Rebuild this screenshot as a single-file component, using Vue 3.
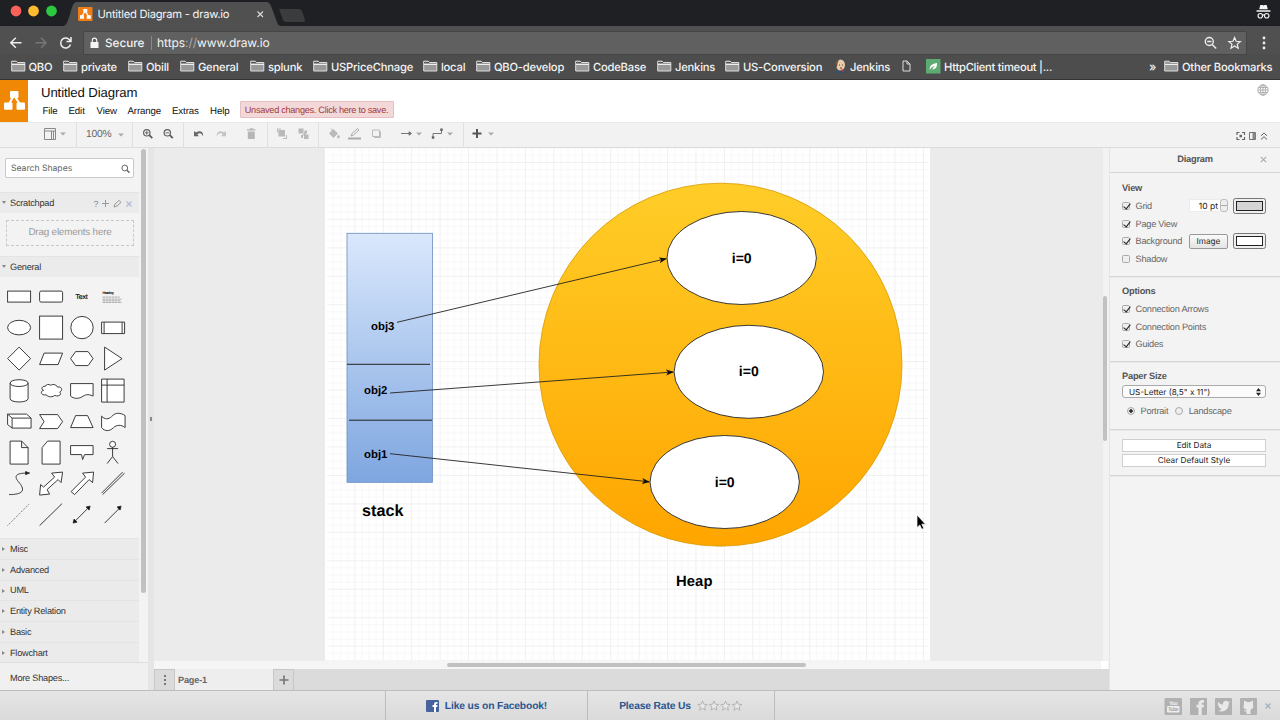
<script setup>
const bookmarks = [
  { t: 'QBO', w: 52.5 }, { t: 'private', w: 65 }, { t: 'Obill', w: 52 }, { t: 'General', w: 70 },
  { t: 'splunk', w: 63 }, { t: 'USPriceChnage', w: 110 }, { t: 'local', w: 53 }, { t: 'QBO-develop', w: 99 },
  { t: 'CodeBase', w: 82 }, { t: 'Jenkins', w: 68 }, { t: 'US-Conversion', w: 108 }
]
const shapes = [
  '<rect x="-11" y="-5.5" width="23" height="11"/>',
  '<rect x="-11" y="-5.5" width="23" height="11" rx="1.5"/>',
  '<text x="-6" y="2.5" font-size="6.8" textLength="12" fill="#000" stroke="#000" stroke-width=".15">Text</text>',
  '<text x="-10" y="-2.4" font-size="3.6" font-weight="bold" fill="#111" stroke="none" textLength="11">Heading</text><path stroke="#888" stroke-width=".7" stroke-dasharray="3 .5 2 .4" d="M-10 .5H7M-10 2.5H9M-10 4.2H8M-10 5.8H9"/>',
  '<ellipse cx=".5" cy="0" rx="11.5" ry="7.3"/>',
  '<rect x="-11" y="-11.5" width="23" height="23"/>',
  '<circle cx=".4" cy="0" r="11.2"/>',
  '<path d="M-11-5.5H12V6H-11ZM-8.5-5.5V6M9.5-5.5V6"/>',
  '<path d="M.5-11.5 12 0 .5 11.5-11 0Z"/>',
  '<path d="M-11 6-6.5-5.5H12L7.500 6Z"/>',
  '<path d="M-11 0-6-7H6.500L11.500 0 6.500 7H-6Z"/>',
  '<path d="M-8-11.500 9.500 0-8 11.500Z"/>',
  '<path d="M-8.500-7.500V8C-8.500 12.500 9.500 12.500 9.500 8V-7.500C9.500-12-8.500-12-8.500-7.500C-8.500-3 9.500-3 9.500-7.500"/>',
  '<path d="M-5-4.500C-9-4.500-10-1-7-.3C-11.500 1-8.500 5.500-4.500 4.200C-2 7 2.500 6.500 4 4.800C7.500 6.500 12 4 9 1.500C13-.5 10.500-4.500 7-3.500C5.500-6.500 1.500-6.500 0-5.300C-2-6.800-4.500-6.300-5-4.500Z"/>',
  '<path d="M-11-7H11.500V5.500C6 3 4 4 0 6.500C-4 8.500-8 8-11 5.500Z"/>',
  '<path d="M-11-11.500H11.500V11.500H-11ZM-5.500-11.500V11.500M-11-5.500H11.500"/>',
  '<path d="M-11-7.500H8L12.500-3.500V6.500H-6.500L-11 3ZM-11-7.500-6.500-3.500V6.500M-6.500-3.500H12.500"/>',
  '<path d="M-11-7H7L12 0 7 7H-11L-6.500 0Z"/>',
  '<path d="M-11 6-6-6H6L11.500 6Z"/>',
  '<path d="M-11-5.500C-8-2-4-2-1-5C3-9.500 8-9 12.500-6V6C9 3 4 3 1 6C-3 10-8 10-11 6Z"/>',
  '<path d="M-8.500-11.500H3L9.500-5V11.500H-8.500ZM3-11.500V-5H9.500"/>',
  '<path d="M-3-11.500H9.500V11.500H-8.500V-5Z"/>',
  '<path d="M-11-7H11.500V2H3L1 7 0 2H-11Z"/>',
  '<circle cx="0" cy="-8.300" r="3"/><path d="M0-5.300V4M-5.500-4H5.500M0 4-5.500 11M0 4 5.500 11"/>',
  '<g fill="none"><path d="M-9.500 11C4 11 7 7 1-.5C-6-8-2-10.500 8-10.500"/><path fill="#111" d="M7-12 11-10.500 7-9Z"/></g>',
  '<path d="M12-11.500 10.500-1 7.500-4-3.500 6-1 10.500-11 11.500-10 1-7 3.500 4-6.500 1-10.500Z"/>',
  '<path d="M12-11.500 11-1 7.500-4-7 11-10.500 8 4-6.500 1-10.500Z"/>',
  '<path d="M-11 9.500 10-11.500M-10 11 12-10.500"/>',
  '<path stroke="#555" stroke-width=".9" stroke-dasharray="1.200 1.200" d="M-11 11 11-11"/>',
  '<path d="M-11 11 11.500-11"/>',
  '<path d="M-7 7 7-7"/><path fill="#111" d="M8.500-8.500 7.500-4.500 4.500-7.500ZM-8.500 8.500-7.500 4.500-4.500 7.500Z"/>',
  '<path d="M-8 8.500 7-6.500"/><path fill="#111" d="M8.500-8.500 7.500-4.500 4.500-7.500Z"/>'
]
const sections = ['Misc', 'Advanced', 'UML', 'Entity Relation', 'Basic', 'Flowchart']
const heapObjects = [{ x: 741.7, y: 258 }, { x: 748.8, y: 371.8 }, { x: 724.7, y: 482 }]
const stackLabels = [{ t: 'obj3', x: 371, y: 329.500 }, { t: 'obj2', x: 364, y: 393.700 }, { t: 'obj1', x: 364, y: 457.700 }]
const edges = ['M397 322.300 666 258.700', 'M390 393 673 372', 'M390 453.700 649 481.800']
</script>

<template>
  <div class="window">
    <header class="chrome">
      <div class="tabstrip">
        <svg class="tabs" width="320" height="26" viewBox="0 0 320 26">
          <circle cx="16" cy="11" r="5.400" fill="#fc605b" /><circle cx="33.500" cy="11" r="5.400" fill="#fdbc2f" /><circle cx="51.500" cy="11" r="5.400" fill="#2bc840" />
          <path d="M64 26C68 25 70 12 73 5C74 3 75 2 77 2H266C269 2 270 4 271 6L277 22C278 25 279 26 282 26Z" fill="#505050" />
          <path d="M279 9H299Q301 9 302 11L305 20Q305 22 303 22H286Q284 22 283 20Z" fill="#3b3c3e" />
          <rect x="78" y="7" width="14.500" height="14" rx=".8" fill="#ef7e17" />
          <path d="M85.200 11 81.500 17M85.200 11 89 17" stroke="#fff" stroke-width="1.300" /><path d="M83.300 9h4v3.500h-4ZM80 15.300h4v3.500h-4ZM86.800 15.300h4v3.500h-4Z" fill="#fff" />
          <path d="M257.500 11.500 263 17M263 11.500 257.500 17" stroke="#ddd" stroke-width="1.100" />
        </svg>
        <span class="tab-title">Untitled Diagram - draw.io</span>
        <svg class="incognito" width="15" height="16" viewBox="0 0 14 15"><path d="M4 1H6L7 1.500 8 1H10L11 5H3ZM.5 5.800H13.500V7.300H.5Z" fill="#f5f5f5" stroke="none" /><circle cx="4" cy="11" r="2.100" /><circle cx="10" cy="11" r="2.100" /><path d="M6 10.500Q7 9.800 8 10.500" /></svg>
      </div>
      <div class="addressbar">
        <svg class="nav" width="83" height="28" viewBox="0 26 83 28" fill="none" stroke-width="1.500">
          <path d="M21.500 42.700H11M15.800 37.700 10.800 42.700 15.800 47.700" stroke="#eee" /><path d="M35.500 42.700H46M41 37.700 46 42.700 41 47.700" stroke="#777" />
          <path d="M70.500 41.500A5 5 0 1 0 70.500 44.500M71 37V41.500H66.500" stroke="#eee" />
        </svg>
        <div class="omnibox">
          <svg width="9" height="12" viewBox="0 0 9 12"><path d="M.5 5H8.500V11H.5Z" fill="#f5f5f5" /><path d="M2.300 5V3.300A2.200 2.200 0 0 1 6.700 3.300V5" fill="none" stroke="#f5f5f5" stroke-width="1.100" /></svg>
          <span class="secure">Secure</span><i></i><span class="url">https<em>://</em>www.draw.io</span>
          <svg class="omni-icons" width="44" height="18" viewBox="1202 34 44 18" fill="none" stroke="#eee" stroke-width="1.400"><circle cx="1209.300" cy="41.500" r="4" /><path d="M1207.200 41.500H1211.400M1212.200 44.500 1216.200 48.500" /><path stroke-width="1.200" d="M1234.600 37.500 1236.200 41.300 1240.300 41.600 1237.200 44.200 1238.200 48.200 1234.600 46 1231 48.200 1232 44.200 1228.900 41.600 1233 41.300Z" /></svg>
        </div>
        <svg class="more" width="6" height="14" viewBox="0 0 6 14" fill="#eee"><circle cx="3" cy="2" r="1.400" /><circle cx="3" cy="7" r="1.400" /><circle cx="3" cy="12" r="1.400" /></svg>
      </div>
      <nav class="bookmarks">
        <span v-for="(b, i) in bookmarks" :key="i" class="bm" :style="{ width: b.w + 'px' }">
          <svg width="15" height="12" viewBox="0 0 15 12"><path d="M.7 11V1.200H5.200L6.500 2.500H13.800V11Z" fill="#999" stroke="#ddd" /><path d="M1 4.500H14" stroke="#eee" /><path d="M1 2.500H6" stroke="#444" stroke-width=".8" /></svg>{{ b.t }}
        </span>
        <span class="bm face"><svg width="13" height="15" viewBox="0 0 13 15"><path d="M2 14Q2 10 6 10Q11 10 12 14Z" fill="#35506a" /><ellipse cx="6.500" cy="6" rx="4.500" ry="5.500" fill="#e8cba9" /><path d="M2 8Q1 2 5 1Q3 4 3 8" fill="#76513a" /><path d="M5 6H6M8 6H9M6 9H8" stroke="#60442e" /><path d="M6 11 10 13V10Z" fill="#cf3338" /></svg>Jenkins</span>
        <span class="bm doc"><svg width="9" height="12" viewBox="0 0 9 12"><path d="M1 1H5L8 4V11H1ZM5 1V4H8" fill="none" stroke="#ddd" /></svg></span>
        <span class="bm http"><svg width="15" height="15" viewBox="0 0 15 15"><rect width="14.500" height="14.500" fill="#5eab72" /><path d="M3.500 11Q3 5 11 4Q11.500 10 6 10.500L9 6.500Q5 8 3.500 11Z" fill="#fff" /></svg>HttpClient timeout |...</span>
        <span class="chev">»</span>
        <span class="bm"><svg width="15" height="12" viewBox="0 0 15 12"><path d="M.7 11V1.200H5.200L6.500 2.500H13.800V11Z" fill="#999" stroke="#ddd" /><path d="M1 4.500H14" stroke="#eee" /></svg>Other Bookmarks</span>
      </nav>
    </header>

    <div class="appbar">
      <svg class="logo" width="28" height="42" viewBox="0 0 28 42"><rect width="28" height="42" fill="#f08705" /><path d="M14 15 8 26M14 15 21 26" stroke="#fff" stroke-width="2.200" /><g fill="#fff"><rect x="10" y="11" width="8.500" height="7" rx="1" /><rect x="4" y="22.500" width="8.500" height="7.300" rx="1" /><rect x="16.500" y="22.500" width="8.500" height="7.300" rx="1" /></g></svg>
      <div class="titles">
        <div class="doc-title">Untitled Diagram</div>
        <div class="menu"><span>File</span><span>Edit</span><span>View</span><span>Arrange</span><span>Extras</span><span>Help</span><b>Unsaved changes. Click here to save.</b></div>
      </div>
      <svg class="globe" width="12" height="12" viewBox="0 0 12 12" fill="none" stroke="#aaa" stroke-width=".9"><circle cx="6" cy="6" r="5.200" /><ellipse cx="6" cy="6" rx="2.500" ry="5.200" /><path d="M6 1V11M1 6H11M1.700 3.500H10.300M1.700 8.500H10.300" /></svg>
    </div>

    <div class="toolbar">
      <svg class="g1" width="76" height="25" viewBox="0 122 76 25"><path d="M44.500 128.500H55.500V139.500H44.500ZM44.500 131H55.500M51.500 131V139.500M53.500 131V139.500" fill="none" stroke="#888" /><path d="M60 132.500H66L63 135.500Z" fill="#aaa" /></svg>
      <div class="zoomlevel">100%<svg width="6" height="4" viewBox="0 0 6 4"><path d="M0 .5H6L3 3.500Z" fill="#aaa" /></svg></div>
      <svg class="g3" width="50" height="25" viewBox="133 122 50 25" fill="none" stroke="#5f5f5f"><g stroke-width="1.200"><circle cx="146.800" cy="132.800" r="3.200" /><circle cx="167.300" cy="132.800" r="3.200" /><path d="M145 132.800H148.600M146.800 131V134.600M165.500 132.800H169.100" stroke-width=".9" /><path stroke-width="1.900" d="M149.300 135.200 152.300 138.200M169.800 135.200 172.800 138.200" /></g></svg>
      <svg class="g4" width="83" height="25" viewBox="184 122 83 25"><path d="M194 131V136.200H199L197.300 134.500C199 132.500 202 133 203 136.500C204 132 200 129.500 196 132.500Z" fill="#686868" /><path d="M226 131V136.200H221L222.700 134.500C221 132.500 218 133 217 136.500C216 132 220 129.500 224 132.500Z" fill="#c4c4c4" /><path d="M247 130.500V129.200H249.500L250 128.200H253L253.500 129.200H255.500V130.500ZM247.800 131.500H254.800V139H247.800Z" fill="#b6b6b6" /></svg>
      <svg class="g5" width="50" height="25" viewBox="268 122 50 25"><g fill="#b9b9b9"><rect x="278.500" y="130" width="6.500" height="6.500" /><path d="M277 128.500h4v1h-3v3h-1ZM283 138h3v-3h1v4h-4Z" /><rect x="298.500" y="128.500" width="5" height="5" /><rect x="304" y="134.500" width="4.500" height="4.500" /><path d="M304.500 130.500h2.500v3h-1.500v2h-2.500v2.500h-2v-3h2l1-2Z" /></g></svg>
      <svg class="g6" width="144" height="25" viewBox="319 122 144 25" fill="none" stroke="#777"><path d="M329.500 133.500 333 129.500 337.500 133.500 333.500 137.500ZM331 128.500 334 131.500M338.500 135Q340.500 138 338.500 138Q336.500 138 338.500 135" fill="#bbb" stroke="#bbb" /><path d="M348 138.500H361" stroke="#aaa" stroke-width="2" /><path d="M351 136 352 133.500 357.500 128.500 359 130 353.500 135Z" stroke="#aaa" /><path d="M372.500 130H379.500V136.500H372.500ZM374 137.500H380.500V131.500" stroke="#bbb" /><path d="M401 133.500H410M409 131.800 411.500 133.500 409 135.200Z" fill="#666" /><path d="M433 137.500V133.500H441.500V129.500" stroke="#777" /><path fill="#666" stroke="none" d="M431.800 136.200h2.500v2.500h-2.500ZM440.200 128.500h2.500v2.500h-2.500Z" /><path fill="#aaa" stroke="none" d="M416 132.500H422L419 135.500ZM447 132.500H453L450 135.500Z" /></svg>
      <svg class="g7" width="40" height="25" viewBox="464 122 40 25"><path d="M477 129V138M472.500 133.500H481.500" stroke="#555" stroke-width="2" /><path fill="#aaa" d="M488 132.500H494L491 135.500Z" /></svg>
      <svg class="tb-right" width="40" height="25" viewBox="1232 122 40 25" fill="none" stroke="#666"><path stroke-width="1.200" d="M1237 135V132.500H1239.500M1242 132.500H1244.500V135M1244.500 137V139.500H1242M1239.500 139.500H1237V137" /><rect x="1239.500" y="134.800" width="2.500" height="2.500" fill="#666" stroke="none" /><path stroke-width=".9" d="M1249.500 132.500H1255.500V139.500H1249.500Z" /><path stroke="none" fill="#888" d="M1252.500 133H1255.500V139H1252.500Z" /><path d="M1261 135.800 1264 133 1267 135.800M1261 139.500 1264 136.700 1267 139.500" /></svg>
    </div>

    <main>
      <aside class="sidebar">
        <div class="palettes">
          <div class="search">Search Shapes<svg width="9" height="10" viewBox="0 0 9 10" fill="none" stroke="#666"><circle cx="3.800" cy="4" r="2.900" /><path stroke-width="1.500" d="M6 6.200 8.500 8.800" /></svg></div>
          <div class="section open">Scratchpad<svg width="42" height="12" viewBox="92 197 42 12" fill="none" stroke="#999"><text x="93.500" y="206.500" font-size="9" font-family="Liberation Sans, sans-serif" fill="#888" stroke="none">?</text><path d="M105.500 200V207M102 203.500H109M114 207 115 204 119 200.500 121 202.300 117 206Z" /><path stroke="#b3bbd8" stroke-width="1.300" d="M126.500 201.500 131.500 206.500M131.500 201.500 126.500 206.500" /></svg></div>
          <div class="drag">Drag elements here</div>
          <div class="section open">General</div>
          <div class="shapes"><svg v-for="(s, i) in shapes" :key="i" viewBox="-15.600 -15.600 31.200 31.200" fill="#fff" stroke="#333" stroke-width=".95" font-family="Liberation Sans, sans-serif" v-html="s" /></div>
          <div v-for="s in sections" :key="s" class="section closed">{{ s }}</div>
        </div>
        <div class="more-shapes">More Shapes...</div>
        <div class="side-scroll"></div>
      </aside>
      <div class="splitter"><i></i></div>

      <section class="workspace">
        <div class="canvas-row">
          <svg class="canvas" width="949" height="513" viewBox="154 148 949 513">
            <defs>
              <pattern id="grid" x="325.900" y="162" width="28.430" height="28.450" patternUnits="userSpaceOnUse">
                <path d="M7.600 0V28.450M14.700 0V28.450M21.800 0V28.450M0 7.600H28.430M0 14.700H28.430M0 21.800H28.430" stroke="#f8f8f8" fill="none" />
                <path d="M.5 0V28.450M0 .5H28.430" stroke="#f0f0f0" fill="none" />
              </pattern>
              <linearGradient id="blue" x2="0" y2="1"><stop stop-color="#dae8fc" /><stop offset="1" stop-color="#7ea6e0" /></linearGradient>
              <linearGradient id="orange" x2="0" y2="1"><stop stop-color="#ffcd28" /><stop offset="1" stop-color="#ffa500" /></linearGradient>
              <marker id="arrow" viewBox="0 0 8 6" refX="7" refY="3" markerWidth="8" markerHeight="6.500" markerUnits="userSpaceOnUse" orient="auto"><path d="M0 0 8 3 0 6 2 3Z" fill="#111" /></marker>
            </defs>
            <rect x="325" y="148" width="605" height="512.500" fill="#fff" />
            <rect x="327" y="148" width="601" height="512" fill="url(#grid)" />
            <rect x="347" y="233.300" width="85.500" height="249" fill="url(#blue)" stroke="#6c8ebf" stroke-width=".8" />
            <circle cx="720.500" cy="364.700" r="181.500" fill="url(#orange)" stroke="#d79b00" stroke-width=".8" />
            <ellipse v-for="(h, i) in heapObjects" :key="i" :cx="h.x" :cy="h.y" rx="74.700" ry="46.500" fill="#fff" stroke="#222" stroke-width=".9" />
            <path d="M347 364.300H430M349 420.200H432" stroke="#222" />
            <path v-for="e in edges" :key="e" :d="e" stroke="#222" stroke-width=".9" marker-end="url(#arrow)" />
            <g class="labels">
              <text v-for="(h, i) in heapObjects" :key="i" :x="h.x" :y="h.y + 4.500" text-anchor="middle" font-size="14">i=0</text>
              <text v-for="l in stackLabels" :key="l.t" :x="l.x" :y="l.y" font-size="11.400">{{ l.t }}</text>
              <text x="362" y="516.300" font-size="16.200">stack</text>
              <text x="676" y="585.500" font-size="14.800" textLength="36.500">Heap</text>
            </g>
            <path d="M917 515V527.500L919.800 525 921.800 529.300 923.800 528.300 921.800 524.200H925.500Z" fill="#000" stroke="#fff" stroke-width=".7" />
          </svg>
          <div class="vtrack"><i></i></div>
        </div>
        <div class="htrack"><i></i><b></b></div>
        <div class="pages">
          <span class="pg-menu"><svg width="4" height="12" viewBox="0 0 4 12" fill="#777"><path d="M1 1h2v2H1ZM1 5h2v2H1ZM1 9h2v2H1Z" /></svg></span>
          <span class="pg-tab">Page-1</span>
          <span class="pg-add"><svg width="10" height="10" viewBox="0 0 10 10"><path d="M5 .5V9.500M.5 5H9.500" stroke="#777" stroke-width="1.700" /></svg></span>
        </div>
      </section>

      <aside class="format">
        <div class="fmt-title">Diagram<svg width="7" height="7" viewBox="0 0 7 7"><path d="M.8.8 6.200 6.200M6.200.8.8 6.200" stroke="#aaa" stroke-width="1.100" /></svg></div>
        <div class="block view">
          <h4>View</h4>
          <div class="row"><span class="cb on"></span>Grid<span class="num">10 pt</span><span class="step"></span><span class="swatch grey"><i></i></span></div>
          <div class="row"><span class="cb on"></span>Page View</div>
          <div class="row"><span class="cb on"></span>Background<span class="imgbtn">Image</span><span class="swatch"><i></i></span></div>
          <div class="row"><span class="cb"></span>Shadow</div>
        </div>
        <div class="block options">
          <h4>Options</h4>
          <div class="row"><span class="cb on"></span>Connection Arrows</div>
          <div class="row"><span class="cb on"></span>Connection Points</div>
          <div class="row"><span class="cb on"></span>Guides</div>
        </div>
        <div class="block paper">
          <h4>Paper Size</h4>
          <div class="select">US-Letter (8,5" x 11")<svg width="5" height="8" viewBox="0 0 5 8"><path d="M0 3.300 2.500 0 5 3.300ZM0 4.700 2.500 8 5 4.700Z" fill="#222" /></svg></div>
          <div class="radios"><span class="rb on"></span>Portrait<span class="rb"></span>Landscape</div>
        </div>
        <div class="block actions"><div class="btn">Edit Data</div><div class="btn">Clear Default Style</div></div>
      </aside>
    </main>

    <footer>
      <div class="f-empty"></div>
      <div class="f-like"><svg width="13" height="12" viewBox="0 0 13 12"><rect width="13" height="12" rx="1" fill="#47639e" /><path d="M8 12V7H6.500V5H8C7.800 2.500 9 1.500 11.500 2V3.800C10 3.600 10 4 10 5H11.500L11.200 7H10V12Z" fill="#fff" /></svg>Like us on Facebook!</div>
      <div class="f-rate">Please Rate Us<svg width="46" height="12" viewBox="0 0 46 12" fill="#e9e9e9" stroke="#aaa" stroke-width=".8"><path v-for="n in 4" :key="n" :transform="`translate(${(n - 1) * 11.500} 0)`" d="M5.500 1 6.800 4.200 10.200 4.500 7.600 6.700 8.400 10.200 5.500 8.300 2.600 10.200 3.400 6.700.8 4.500 4.200 4.200Z" /></svg></div>
      <svg class="social" width="110" height="20" viewBox="1163 696 110 20">
        <g fill="#b1b1b1"><rect x="1164.500" y="698" width="17.500" height="17" rx="1" /><rect x="1190" y="698" width="17" height="17" rx="1" /><rect x="1215" y="698" width="17" height="17" rx="1" /><rect x="1240" y="698" width="17" height="17" rx="1" /></g>
        <rect x="1167" y="706" width="12.500" height="6.500" rx="1" fill="#eee" />
        <g font-family="Liberation Sans, sans-serif" font-weight="bold" font-size="5.500"><text x="1169" y="704.800" textLength="8.500" fill="#eee">You</text><text x="1168" y="711.300" textLength="10.500" fill="#aaa">Tube</text></g>
        <g fill="#e9e9e9"><path d="M1198.500 715V707.500H1196.500V704.800H1198.500C1198 701 1200 699.500 1204 700V702.800C1201.800 702.600 1201.700 703 1201.700 704.800H1204L1203.600 707.500H1201.700V715Z" /><path d="M1218 702C1220 704 1221.500 704.500 1223 704.500C1222.500 700.500 1227 700 1228 702L1230 701.500 1228.700 703.500C1229 710 1223 713 1218 710.500C1220 710.500 1221 710 1221.500 709C1219.500 708.500 1219 707.500 1219 706.500C1218 705.500 1217.500 704 1218 702Z" /><path d="M1244 700.500 1247 702H1250L1253 700.500V704.500C1254 708 1252.500 709 1250.500 709.500V714H1246.500V711.500C1244.500 712 1244.500 710.500 1243.500 710C1245 710 1245 711 1246.500 710.500V709.500C1243.500 709 1243 707 1244 704.500Z" /></g>
        <path d="M1265.500 703.500 1270.500 708.500M1270.500 703.500 1265.500 708.500" stroke="#a3b0c3" stroke-width="1.300" />
      </svg>
    </footer>
  </div>
</template>

<style>
html, body { margin: 0; overflow: hidden; }
</style>

<style scoped>
* { box-sizing: border-box; }
svg { display: block; flex: none; }
.window { width: 1280px; height: 720px; display: flex; flex-direction: column; overflow: hidden; font: 9.2px "Liberation Sans", Arial, sans-serif; text-rendering: geometricPrecision; color: #333; white-space: nowrap; background: #fff; }
.chrome { height: 80px; flex: none; font-family: Inter, sans-serif; color: #f4f4f4; background: #4d4d4d; border-bottom: 1px solid #353535; }
.tabstrip { height: 26px; background: #1e2023; position: relative; display: flex; justify-content: flex-end; align-items: center; padding-right: 9px; }
.tabs { position: absolute; left: 0; top: 0; }
.tab-title { position: absolute; left: 97.500px; top: 6px; font-size: 11.200px; line-height: 16px; letter-spacing: -.25px; }
.incognito { fill: none; stroke: #eee; stroke-width: 1.1; margin-top: -3px; }
.addressbar { height: 28px; display: flex; align-items: center; background: #505050; }
.omnibox { width: 1164px; height: 24px; margin-top: 5px; background: #606060; border: 1px solid #454545; border-radius: 2px; display: flex; align-items: center; padding: 0 0 0 6px; font-size: 12px; }
.secure { margin-left: 6px; width: 40px; font-weight: 500; font-size: 11.700px; }
.omnibox i { width: 1px; height: 14px; background: #888; margin: 0 5px 0 6px; }
.url { letter-spacing: -.05px; }
.url em { font-style: normal; color: #aaa; }
.omni-icons { margin-left: auto; }
.more { margin: 5px 0 0 14px; }
.bookmarks { height: 25px; padding-left: 10.500px; display: flex; align-items: center; font-size: 11.200px; font-weight: 500; letter-spacing: -.18px; }
.bm { flex: none; display: flex; align-items: center; gap: 2.900px; }
.bm svg { margin-top: -1px; }
.face { width: 69px; padding-left: 1px; }
.doc { width: 23px; }
.http { gap: 3px; padding-left: 1px; letter-spacing: -.26px; }
.chev { margin-left: auto; margin-right: 8px; margin-top: -1px; font-size: 12px; }
.bookmarks > :last-child { width: 116px; }
.appbar { height: 42px; flex: none; display: flex; color: #111; background: #fff; }
.titles { margin-left: 13px; padding-top: 4px; }
.doc-title { font-size: 13.200px; line-height: 17px; letter-spacing: -.12px; }
.menu { display: flex; font-size: 9.700px; line-height: 17px; margin: 2px 0 0 1.500px; letter-spacing: -.12px; }
.menu span:nth-child(1) { width: 26px; } .menu span:nth-child(2) { width: 28px; } .menu span:nth-child(3) { width: 31px; } .menu span:nth-child(4) { width: 44.500px; } .menu span:nth-child(5) { width: 38px; } .menu span:nth-child(6) { width: 29.500px; }
.menu b { font-weight: normal; font-size: 9.200px; letter-spacing: -.3px; width: 154px; height: 17px; line-height: 16px; margin-top: -2px; text-align: center; color: #a23a3c; background: #f2d8d9; border: 1px solid #e6bfc2; border-radius: 1px; }
.globe { margin: 4px 11px 0 auto; }
.toolbar { height: 26px; flex: none; display: flex; background: #f2f2f2; border-bottom: 1px solid #dcdcdc; box-shadow: inset 0 1px #e9e9e9; }
.toolbar > * { height: 25px; }
.g1, .zoomlevel, .g3, .g4, .g5, .g6 { box-sizing: content-box; border-right: 1px solid #e0e0e0; }
.zoomlevel { width: 55px; display: flex; align-items: center; padding-left: 0; gap: 6px; font-size: 10.300px; letter-spacing: -.2px; color: #666; text-indent: 9px; }
.tb-right { margin-left: auto; margin-right: 8px; }
main { height: 542px; flex: none; display: flex; }
.sidebar { width: 148px; position: relative; background: #f3f3f3; letter-spacing: -.24px; }
.palettes { width: 139px; height: 514px; padding-top: 10px; overflow: hidden; }
.search { width: 129px; height: 20px; margin: 0 0 14px 5px; padding: 1px 3px 0 5px; background: #fff; border: 1px solid #c9c9c9; border-radius: 2px; display: flex; align-items: center; justify-content: space-between; font-family: Inter, sans-serif; font-size: 8.700px; color: #666; letter-spacing: -.05px; }
.section { height: 21px; padding-left: 10px; position: relative; display: flex; align-items: center; justify-content: space-between; background: #ebebeb; border-top: 1px solid #e4e4e4; }
.section::before { content: ""; position: absolute; left: 2px; top: 8px; border: 2.5px solid transparent; }
.open::before { border-top-color: #888; border-top-width: 3.500px; left: 1.500px; }
.closed::before { border-left-color: #888; border-left-width: 3.500px; }
.section svg { margin-right: 5px; }
.closed { height: 20.800px; }
.drag { width: 128px; height: 26px; margin: 7px 0 10px 6px; border: 1.500px dashed #c8c8c8; text-align: center; line-height: 24px; font-size: 9.900px; color: #999; letter-spacing: -.2px; }
.shapes { height: 261px; padding: 4px 0 0 3.300px; display: grid; grid-template-columns: repeat(4, 31.300px); grid-auto-rows: 31.200px; align-content: start; letter-spacing: 0; }
.shapes svg { width: 31.200px; height: 31.200px; }
.more-shapes { height: 28px; border-top: 1px solid #dedede; padding-left: 10px; line-height: 31px; background: #f0f0f0; }
.side-scroll { position: absolute; left: 141px; top: 1px; width: 5px; height: 444px; border-radius: 3px; background: #c1c1c1; }
.splitter { width: 6px; background: #e5e5e5; display: flex; align-items: center; justify-content: center; }
.splitter i { width: 2px; height: 4px; background: #888; }
.workspace { width: 955px; background: #ebebeb; display: flex; flex-direction: column; }
.canvas-row { height: 513px; display: flex; }
.vtrack { width: 6px; background: #f2f2f2; padding-top: 148px; }
.vtrack i { display: block; width: 4px; height: 145px; border-radius: 2px; background: #c1c1c1; }
.labels { font-family: "Liberation Sans", Arial, sans-serif; font-weight: bold; fill: #000; }
.htrack { height: 8px; background: #f5f5f5; display: flex; align-items: center; }
.htrack i { width: 359px; height: 4.500px; margin-left: 293px; border-radius: 2px; background: #c1c1c1; }
.htrack b { width: 7px; height: 8px; margin: 0 1px 0 auto; background: #fff; }
.pages { height: 21px; display: flex; background: #dbdbdb; }
.pages span { display: flex; align-items: center; }
.pg-menu, .pg-add { width: 21px; justify-content: center; background: #dbdbdb; border: 1px solid #c7c7c7; border-width: 1px 1px 0; }
.pg-tab { width: 98px; padding: 1px 0 0 3px; font-weight: bold; font-size: 9.200px; letter-spacing: -.2px; color: #666; background: #eee; }
.format { width: 171px; background: #f3f3f3; border-left: 1px solid #e5e5e5; color: #666; font-size: 9.200px; letter-spacing: -.24px; }
.fmt-title { height: 25px; line-height: 22px; text-align: center; font-weight: bold; border-bottom: 1px solid #d5d5d5; position: relative; color: #555; font-size: 9.300px; }
.fmt-title svg { position: absolute; right: 13px; top: 8px; }
.block { padding: 0 14px 0 12px; border-bottom: 1px solid #d5d5d5; box-shadow: 0 1px #e9e9e9; }
.view { height: 104px; padding-top: 6px; }
.options { height: 85px; padding-top: 5px; }
.paper { height: 68px; padding-top: 5px; }
.actions { height: 46px; padding-top: 8.500px; }
h4 { font-size: 9.300px; line-height: 18px; margin: 0; color: #555; }
.row { height: 17.800px; display: flex; align-items: center; }
.cb { width: 8px; height: 8px; margin-right: 5.500px; border: 1px solid #aaa; border-radius: 1.500px; background: #eee; position: relative; }
.cb.on::after { content: ""; position: absolute; left: 2px; top: -1px; width: 3px; height: 6px; border: solid #222; border-width: 0 1.400px 1.400px 0; transform: rotate(38deg); }
.num, .imgbtn, .select, .btn { letter-spacing: 0; }
.num { width: 31px; height: 13px; margin-left: auto; line-height: 14px; text-align: right; padding-right: 2px; background: #fff; border: 1px solid #ececec; border-right: 0; color: #222; font-family: Inter, sans-serif; font-size: 8.500px; }
.step { width: 8px; height: 13px; margin-right: 5px; border: 1px solid #bbb; border-radius: 3px; background: linear-gradient(#eee 45%, #aaa 45% 55%, #eee 55%); }
.swatch { width: 33px; height: 16px; padding: 2px; border: 1px solid #777; border-radius: 2.500px; background: #eee; flex: none; }
.swatch i { display: block; height: 10px; border: 1px solid #222; background: #fff; }
.grey i { background: #d4d4d4; }
.imgbtn { width: 39px; height: 15px; margin: 0 5px 0 auto; text-align: center; line-height: 12px; border: 1px solid #999; border-radius: 2px; background: linear-gradient(#fafafa, #e4e4e4); color: #222; font-family: Inter, sans-serif; font-size: 8.200px; }
.select { width: 144px; height: 13px; padding: 0 4px 0 6px; display: flex; align-items: center; justify-content: space-between; background: #fbfbfb; border: 1px solid #aaa; border-radius: 3px; color: #222; font-family: Inter, sans-serif; font-size: 8.200px; }
.radios { height: 25px; padding-left: 5px; display: flex; align-items: center; }
.rb { width: 8px; height: 8px; margin-right: 5.500px; border: 1px solid #aaa; border-radius: 50%; background: #eee; }
.rb:nth-child(2) { margin-left: 7px; }
.rb.on { background: radial-gradient(circle, #333 0 1.500px, #eee 2px); }
.btn { width: 144px; height: 13px; margin-bottom: 2.500px; border: 1px solid #cfcfcf; background: #fff; text-align: center; line-height: 11.500px; color: #222; font-family: Inter, sans-serif; font-size: 8.200px; }
footer { height: 30px; flex: none; display: flex; background: linear-gradient(#e5e5e5, #dadada); border-top: 1px solid #bdbdbd; font-weight: bold; font-size: 10.300px; letter-spacing: -.15px; color: #2a5590; }
footer > div { display: flex; align-items: center; justify-content: center; border-right: 1px solid #bcbcbc; padding-top: 1px; }
.f-empty { width: 386px; }
.f-like { width: 202px; gap: 6px; }
.f-rate { width: 187px; gap: 6px; }
.social { margin: 5px 7px 0 auto; }
</style>
